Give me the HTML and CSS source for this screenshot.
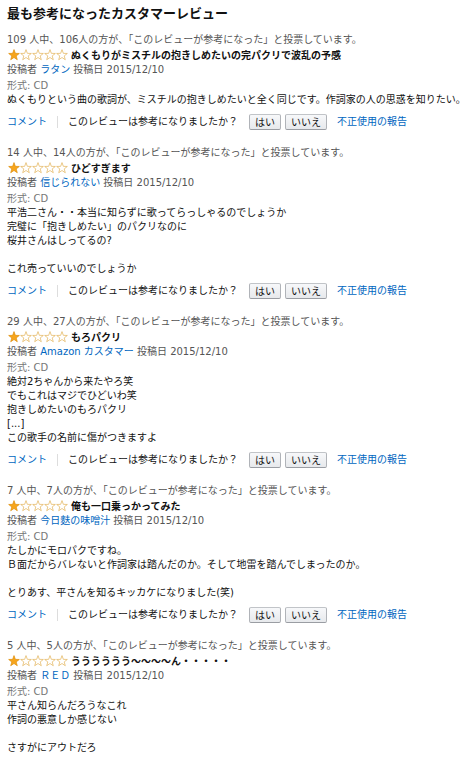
FILE: index.html
```html
<!DOCTYPE html>
<html lang="ja">
<head>
<meta charset="utf-8">
<title>最も参考になったカスタマーレビュー</title>
<link rel="stylesheet" href="styles.css">
</head>
<body>
<div class="page">
  <h2 class="heading">最も参考になったカスタマーレビュー</h2>

  <div class="review">
    <div class="votes">109 人中、106人の方が、「このレビューが参考になった」と投票しています。</div>
    <div class="title-row">
      <svg class="stars" viewBox="0 0 60 12" width="60" height="12" aria-label="5つ星のうち1.0">
        <polygon class="on" points="6,0.6 7.35,4.34 11.33,4.47 8.19,6.91 9.29,10.73 6,8.5 2.71,10.73 3.81,6.91 0.67,4.47 4.65,4.34"/>
        <polygon class="off" transform="translate(12 0)" points="6,0.6 7.35,4.34 11.33,4.47 8.19,6.91 9.29,10.73 6,8.5 2.71,10.73 3.81,6.91 0.67,4.47 4.65,4.34"/>
        <polygon class="off" transform="translate(24 0)" points="6,0.6 7.35,4.34 11.33,4.47 8.19,6.91 9.29,10.73 6,8.5 2.71,10.73 3.81,6.91 0.67,4.47 4.65,4.34"/>
        <polygon class="off" transform="translate(36 0)" points="6,0.6 7.35,4.34 11.33,4.47 8.19,6.91 9.29,10.73 6,8.5 2.71,10.73 3.81,6.91 0.67,4.47 4.65,4.34"/>
        <polygon class="off" transform="translate(48 0)" points="6,0.6 7.35,4.34 11.33,4.47 8.19,6.91 9.29,10.73 6,8.5 2.71,10.73 3.81,6.91 0.67,4.47 4.65,4.34"/>
      </svg>
      <span class="title">ぬくもりがミスチルの抱きしめたいの完パクリで波乱の予感</span>
    </div>
    <div class="byline">投稿者 <a href="#" class="link">ラタン</a> 投稿日 2015/12/10</div>
    <div class="format">形式: CD</div>
    <div class="text">ぬくもりという曲の歌詞が、ミスチルの抱きしめたいと全く同じです。作詞家の人の思惑を知りたい。</div>
    <div class="actions">
      <a href="#" class="link">コメント</a>
      <span class="sep"></span>
      <span class="ask">このレビューは参考になりましたか？</span>
      <button class="btn">はい</button>
      <button class="btn">いいえ</button>
      <a href="#" class="link report">不正使用の報告</a>
    </div>
  </div>

  <div class="review">
    <div class="votes">14 人中、14人の方が、「このレビューが参考になった」と投票しています。</div>
    <div class="title-row">
      <svg class="stars" viewBox="0 0 60 12" width="60" height="12" aria-label="5つ星のうち1.0">
        <polygon class="on" points="6,0.6 7.35,4.34 11.33,4.47 8.19,6.91 9.29,10.73 6,8.5 2.71,10.73 3.81,6.91 0.67,4.47 4.65,4.34"/>
        <polygon class="off" transform="translate(12 0)" points="6,0.6 7.35,4.34 11.33,4.47 8.19,6.91 9.29,10.73 6,8.5 2.71,10.73 3.81,6.91 0.67,4.47 4.65,4.34"/>
        <polygon class="off" transform="translate(24 0)" points="6,0.6 7.35,4.34 11.33,4.47 8.19,6.91 9.29,10.73 6,8.5 2.71,10.73 3.81,6.91 0.67,4.47 4.65,4.34"/>
        <polygon class="off" transform="translate(36 0)" points="6,0.6 7.35,4.34 11.33,4.47 8.19,6.91 9.29,10.73 6,8.5 2.71,10.73 3.81,6.91 0.67,4.47 4.65,4.34"/>
        <polygon class="off" transform="translate(48 0)" points="6,0.6 7.35,4.34 11.33,4.47 8.19,6.91 9.29,10.73 6,8.5 2.71,10.73 3.81,6.91 0.67,4.47 4.65,4.34"/>
      </svg>
      <span class="title">ひどすぎます</span>
    </div>
    <div class="byline">投稿者 <a href="#" class="link">信じられない</a> 投稿日 2015/12/10</div>
    <div class="format">形式: CD</div>
    <div class="text">平浩二さん・・本当に知らずに歌ってらっしゃるのでしょうか<br>完璧に「抱きしめたい」のパクリなのに<br>桜井さんはしってるの?<br><br>これ売っていいのでしょうか</div>
    <div class="actions">
      <a href="#" class="link">コメント</a>
      <span class="sep"></span>
      <span class="ask">このレビューは参考になりましたか？</span>
      <button class="btn">はい</button>
      <button class="btn">いいえ</button>
      <a href="#" class="link report">不正使用の報告</a>
    </div>
  </div>

  <div class="review">
    <div class="votes">29 人中、27人の方が、「このレビューが参考になった」と投票しています。</div>
    <div class="title-row">
      <svg class="stars" viewBox="0 0 60 12" width="60" height="12" aria-label="5つ星のうち1.0">
        <polygon class="on" points="6,0.6 7.35,4.34 11.33,4.47 8.19,6.91 9.29,10.73 6,8.5 2.71,10.73 3.81,6.91 0.67,4.47 4.65,4.34"/>
        <polygon class="off" transform="translate(12 0)" points="6,0.6 7.35,4.34 11.33,4.47 8.19,6.91 9.29,10.73 6,8.5 2.71,10.73 3.81,6.91 0.67,4.47 4.65,4.34"/>
        <polygon class="off" transform="translate(24 0)" points="6,0.6 7.35,4.34 11.33,4.47 8.19,6.91 9.29,10.73 6,8.5 2.71,10.73 3.81,6.91 0.67,4.47 4.65,4.34"/>
        <polygon class="off" transform="translate(36 0)" points="6,0.6 7.35,4.34 11.33,4.47 8.19,6.91 9.29,10.73 6,8.5 2.71,10.73 3.81,6.91 0.67,4.47 4.65,4.34"/>
        <polygon class="off" transform="translate(48 0)" points="6,0.6 7.35,4.34 11.33,4.47 8.19,6.91 9.29,10.73 6,8.5 2.71,10.73 3.81,6.91 0.67,4.47 4.65,4.34"/>
      </svg>
      <span class="title">もろパクリ</span>
    </div>
    <div class="byline">投稿者 <a href="#" class="link">Amazon カスタマー</a> 投稿日 2015/12/10</div>
    <div class="format">形式: CD</div>
    <div class="text">絶対2ちゃんから来たやろ笑<br>でもこれはマジでひどいわ笑<br>抱きしめたいのもろパクリ<br>[...]<br>この歌手の名前に傷がつきますよ</div>
    <div class="actions">
      <a href="#" class="link">コメント</a>
      <span class="sep"></span>
      <span class="ask">このレビューは参考になりましたか？</span>
      <button class="btn">はい</button>
      <button class="btn">いいえ</button>
      <a href="#" class="link report">不正使用の報告</a>
    </div>
  </div>

  <div class="review">
    <div class="votes">7 人中、7人の方が、「このレビューが参考になった」と投票しています。</div>
    <div class="title-row">
      <svg class="stars" viewBox="0 0 60 12" width="60" height="12" aria-label="5つ星のうち1.0">
        <polygon class="on" points="6,0.6 7.35,4.34 11.33,4.47 8.19,6.91 9.29,10.73 6,8.5 2.71,10.73 3.81,6.91 0.67,4.47 4.65,4.34"/>
        <polygon class="off" transform="translate(12 0)" points="6,0.6 7.35,4.34 11.33,4.47 8.19,6.91 9.29,10.73 6,8.5 2.71,10.73 3.81,6.91 0.67,4.47 4.65,4.34"/>
        <polygon class="off" transform="translate(24 0)" points="6,0.6 7.35,4.34 11.33,4.47 8.19,6.91 9.29,10.73 6,8.5 2.71,10.73 3.81,6.91 0.67,4.47 4.65,4.34"/>
        <polygon class="off" transform="translate(36 0)" points="6,0.6 7.35,4.34 11.33,4.47 8.19,6.91 9.29,10.73 6,8.5 2.71,10.73 3.81,6.91 0.67,4.47 4.65,4.34"/>
        <polygon class="off" transform="translate(48 0)" points="6,0.6 7.35,4.34 11.33,4.47 8.19,6.91 9.29,10.73 6,8.5 2.71,10.73 3.81,6.91 0.67,4.47 4.65,4.34"/>
      </svg>
      <span class="title">俺も一口乗っかってみた</span>
    </div>
    <div class="byline">投稿者 <a href="#" class="link">今日麩の味噌汁</a> 投稿日 2015/12/10</div>
    <div class="format">形式: CD</div>
    <div class="text">たしかにモロパクですね。<br>Ｂ面だからバレないと作詞家は踏んだのか。そして地雷を踏んでしまったのか。<br><br>とりあす、平さんを知るキッカケになりました(笑)</div>
    <div class="actions">
      <a href="#" class="link">コメント</a>
      <span class="sep"></span>
      <span class="ask">このレビューは参考になりましたか？</span>
      <button class="btn">はい</button>
      <button class="btn">いいえ</button>
      <a href="#" class="link report">不正使用の報告</a>
    </div>
  </div>

  <div class="review">
    <div class="votes">5 人中、5人の方が、「このレビューが参考になった」と投票しています。</div>
    <div class="title-row">
      <svg class="stars" viewBox="0 0 60 12" width="60" height="12" aria-label="5つ星のうち1.0">
        <polygon class="on" points="6,0.6 7.35,4.34 11.33,4.47 8.19,6.91 9.29,10.73 6,8.5 2.71,10.73 3.81,6.91 0.67,4.47 4.65,4.34"/>
        <polygon class="off" transform="translate(12 0)" points="6,0.6 7.35,4.34 11.33,4.47 8.19,6.91 9.29,10.73 6,8.5 2.71,10.73 3.81,6.91 0.67,4.47 4.65,4.34"/>
        <polygon class="off" transform="translate(24 0)" points="6,0.6 7.35,4.34 11.33,4.47 8.19,6.91 9.29,10.73 6,8.5 2.71,10.73 3.81,6.91 0.67,4.47 4.65,4.34"/>
        <polygon class="off" transform="translate(36 0)" points="6,0.6 7.35,4.34 11.33,4.47 8.19,6.91 9.29,10.73 6,8.5 2.71,10.73 3.81,6.91 0.67,4.47 4.65,4.34"/>
        <polygon class="off" transform="translate(48 0)" points="6,0.6 7.35,4.34 11.33,4.47 8.19,6.91 9.29,10.73 6,8.5 2.71,10.73 3.81,6.91 0.67,4.47 4.65,4.34"/>
      </svg>
      <span class="title">うううううう～～～～ん・・・・・</span>
    </div>
    <div class="byline">投稿者 <a href="#" class="link">ＲＥＤ</a> 投稿日 2015/12/10</div>
    <div class="format">形式: CD</div>
    <div class="text">平さん知らんだろうなこれ<br>作詞の悪意しか感じない<br><br>さすがにアウトだろ</div>
  </div>
</div>
</body>
</html>
```

FILE: styles.css
```css
html, body {
  margin: 0;
  padding: 0;
  background: #fff;
}

body {
  font-family: "DejaVu Sans", "Noto Sans CJK JP", sans-serif;
  font-size: 10px;
  line-height: 14px;
  color: #111;
}

.page {
  padding: 0 0 0 7px;
}

.heading {
  margin: 0 0 11px;
  padding-top: 4px;
  font-family: "Noto Sans CJK JP", sans-serif;
  font-size: 13px;
  line-height: 18px;
  font-weight: bold;
  color: #111;
}

.review {
  margin-bottom: 15px;
}

.votes {
  color: #555;
  white-space: nowrap;
}

.title-row {
  display: flex;
  align-items: center;
  height: 15px;
  line-height: 15px;
}

.stars {
  display: block;
  width: 60px;
  height: 12px;
  margin-left: 1px;
  margin-right: 3px;
}

.stars .on {
  fill: #f7a51c;
  stroke: #de8e0a;
  stroke-width: 0.7;
  stroke-linejoin: round;
}

.stars .off {
  fill: #fff;
  stroke: #e2b256;
  stroke-width: 0.7;
  stroke-linejoin: round;
}

.title {
  font-family: "Noto Sans CJK JP", sans-serif;
  font-weight: bold;
  color: #111;
  white-space: nowrap;
}

.byline {
  color: #555;
  line-height: 15px;
  white-space: nowrap;
}

.format {
  margin-top: 2px;
  color: #767676;
}

.text {
  color: #111;
  white-space: nowrap;
}

.link {
  color: #0066c0;
  text-decoration: none;
}

.actions {
  display: flex;
  align-items: center;
  height: 18px;
  margin-top: 6px;
  white-space: nowrap;
}

.sep {
  width: 1px;
  height: 12px;
  background: #ddd;
  margin: 0 10px;
}

.ask {
  color: #111;
  margin-right: 11px;
}

.btn {
  box-sizing: border-box;
  height: 16px;
  margin: 0 4px 0 0;
  padding: 0 5px;
  font-family: "Noto Sans CJK JP", sans-serif;
  font-size: 10px;
  line-height: 14px;
  color: #111;
  background: linear-gradient(#f7f8fa, #e7e9ec);
  border: 1px solid #adb1b8;
  border-color: #c1c4c8 #b0b3b8 #9a9da3;
  border-radius: 2px;
}

.report {
  margin-left: 6px;
}
```
